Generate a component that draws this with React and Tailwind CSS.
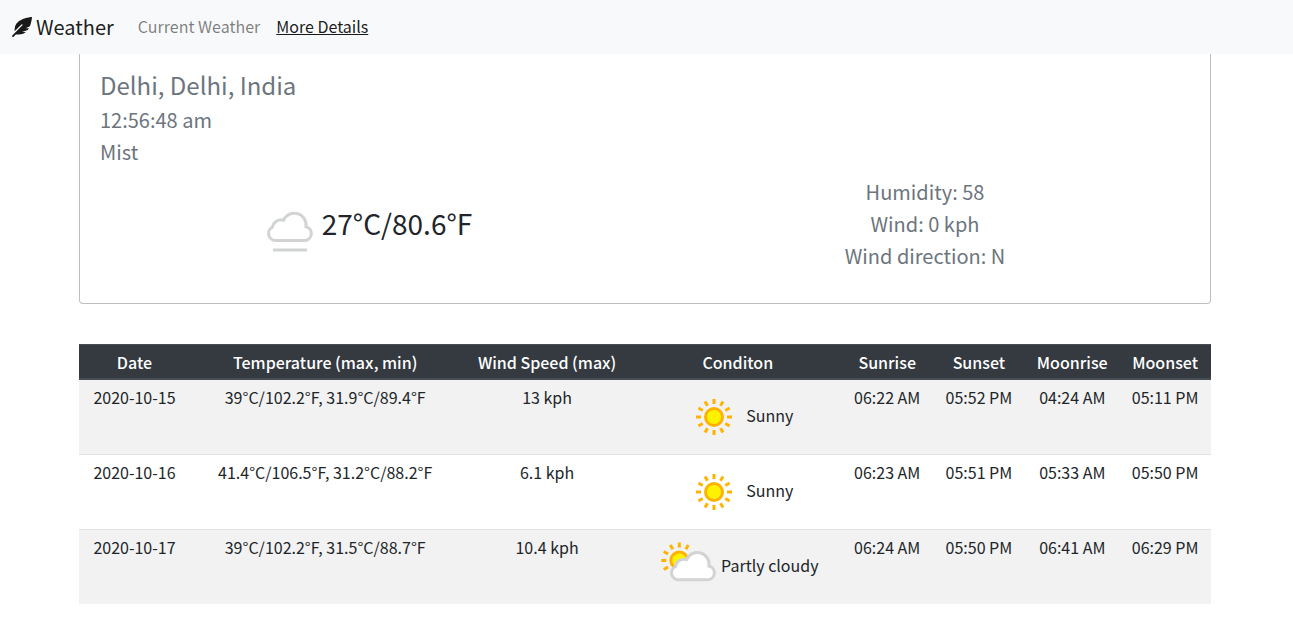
import React from "react";
import { FaFeatherAlt } from "react-icons/fa";

const CLOUD =
  "M17.5 47.500a7 7 0 0 1-3-13.300A8.500 8.500 0 0 1 25.500 27.300A11.800 11.800 0 0 1 48 33.700A7 7 0 0 1 46.500 47.500Z";

const allRays = [0, 30, 60, 90, 120, 150, 180, 210, 240, 270, 300, 330];
const upperRays = [240, 270, 300, 330, 0, 30];

function Sun({ rays }) {
  return (
    <>
      <circle cx="32" cy="32" r="8.500" fill="#fff200" stroke="#ffb300" strokeWidth="3" />
      {rays.map((a) => (
        <path key={a} d="M32 14V19" stroke="#ffb300" strokeWidth="3" transform={`rotate(${a} 32 32)`} />
      ))}
    </>
  );
}

function SunIcon() {
  return (
    <svg viewBox="0 0 64 64" className="h-16 w-16 shrink-0" aria-hidden="true">
      <Sun rays={allRays} />
    </svg>
  );
}

function PartlyCloudyIcon() {
  return (
    <svg viewBox="0 0 64 64" className="h-16 w-16 shrink-0" aria-hidden="true">
      <g transform="translate(-9.700 -6.500)">
        <Sun rays={upperRays} />
      </g>
      <path d={CLOUD} transform="translate(4 -2.700)" fill="#fff" stroke="#d1d3d4" strokeWidth="3" />
    </svg>
  );
}

function MistIcon() {
  return (
    <svg viewBox="0 0 64 64" className="h-16 w-16 shrink-0" aria-hidden="true">
      <path d={CLOUD} transform="translate(0 1)" fill="#fff" stroke="#d1d3d4" strokeWidth="3" />
      <path d="M15 58H49" stroke="#d1d3d4" strokeWidth="3" />
    </svg>
  );
}

const columns = [
  ["Date", "w-[9.8%]"],
  ["Temperature (max, min)", "w-[23.9%]"],
  ["Wind Speed (max)", "w-[15.3%]"],
  ["Conditon", "w-[18.4%]"],
  ["Sunrise", "w-[8%]"],
  ["Sunset", "w-[8.2%]"],
  ["Moonrise", "w-[8.3%]"],
  ["Moonset", "w-[8.1%]"],
];

const days = [
  { date: "2020-10-15", temp: "39°C/102.2°F, 31.9°C/89.4°F", wind: "13 kph", cond: "Sunny", times: ["06:22 AM", "05:52 PM", "04:24 AM", "05:11 PM"] },
  { date: "2020-10-16", temp: "41.4°C/106.5°F, 31.2°C/88.2°F", wind: "6.1 kph", cond: "Sunny", times: ["06:23 AM", "05:51 PM", "05:33 AM", "05:50 PM"] },
  { date: "2020-10-17", temp: "39°C/102.2°F, 31.5°C/88.7°F", wind: "10.4 kph", cond: "Partly cloudy", times: ["06:24 AM", "05:50 PM", "06:41 AM", "06:29 PM"] },
];

export default function App() {
  return (
    <div className="min-h-screen bg-white font-['Noto_Sans_CJK_JP',sans-serif] text-base text-[#212529]">
      <header className="flex h-[54px] items-center bg-[#f8f9fa] px-3">
        <a href="#" className="mr-6 flex items-center gap-1 text-xl text-black/90">
          <FaFeatherAlt className="h-5 w-5" aria-hidden="true" />
          Weather
        </a>
        <nav className="flex items-center gap-4 pb-0.5">
          <a href="#current" className="text-black/50">Current Weather</a>
          <a href="#details" aria-current="page" className="text-black/90 underline">More Details</a>
        </nav>
      </header>

      <main className="pr-[82px] pb-6 pl-[79px]">
        <section className="rounded-b border-x border-b border-black/25 px-5 pt-3 pb-[31px] text-[#6c757d]">
          <h1 className="text-2xl leading-[38px]">Delhi, Delhi, India</h1>
          <p className="text-xl leading-8">12:56:48 am</p>
          <p className="text-xl leading-8">Mist</p>
          <div className="-mx-[15px] mt-2 grid grid-cols-2 items-center text-center">
            <div className="flex items-center justify-center text-[28px] text-[#212529]">
              <MistIcon />
              <span className="pb-0.5">27°C/80.6°F</span>
            </div>
            <div className="text-xl leading-8">
              <p>Humidity: 58</p>
              <p>Wind: 0 kph</p>
              <p>Wind direction: N</p>
            </div>
          </div>
        </section>

        <table className="mt-10 w-full table-fixed border-collapse text-center">
          <thead className="bg-[#343a40] text-white">
            <tr className="h-[34px] border-t border-b-2 border-[#454d55]">
              {columns.map(([name, width]) => (
                <th key={name} scope="col" className={`${width} pt-0.5 font-medium`}>{name}</th>
              ))}
            </tr>
          </thead>
          <tbody>
            {days.map((d) => (
              <tr key={d.date} className="border-t border-[#dee2e6] align-top odd:bg-[#f2f2f2]">
                <td className="pt-[5px]">{d.date}</td>
                <td className="pt-[5px]">{d.temp}</td>
                <td className="pt-[5px]">{d.wind}</td>
                <td className="py-[5px]">
                  <div className="flex items-center justify-center">
                    {d.cond === "Sunny" ? <SunIcon /> : <PartlyCloudyIcon />}
                    <span className="pb-1">{d.cond}</span>
                  </div>
                </td>
                {d.times.map((t) => (
                  <td key={t} className="pt-[5px]">{t}</td>
                ))}
              </tr>
            ))}
          </tbody>
        </table>
      </main>
    </div>
  );
}
